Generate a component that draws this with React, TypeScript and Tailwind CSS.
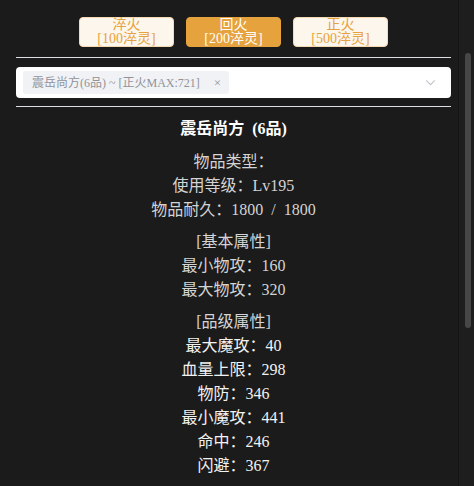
import * as React from "react";

const font = {
  fontFamily: '"Liberation Serif", "Noto Sans CJK SC", serif',
};

const tabs = [
  { name: "淬火", cost: "[100淬灵]" },
  { name: "回火", cost: "[200淬灵]" },
  { name: "正火", cost: "[500淬灵]" },
];

const baseInfo = ["物品类型：", "使用等级：Lv195", "物品耐久：1800 / 1800"];
const basicAttrs = ["最小物攻：160", "最大物攻：320"];
const gradeAttrs = [
  "最大魔攻：40",
  "血量上限：298",
  "物防：346",
  "最小魔攻：441",
  "命中：246",
  "闪避：367",
];

export default function App() {
  const [active, setActive] = React.useState(1);

  return (
    <div
      className="flex h-[486px] w-[474px] overflow-hidden bg-[#1b1b1b]"
      style={font}
    >
      <div className="flex w-[458px] flex-col pl-4 pr-[7px] pt-[17px]">
        <div className="flex justify-center gap-3">
          {tabs.map((t, i) => (
            <button
              key={t.name}
              type="button"
              onClick={() => setActive(i)}
              className={
                i === active
                  ? "flex h-[30px] w-[95px] flex-col items-center justify-center rounded-[4px] border border-[#e6a23c] bg-[#e6a23c] text-[14px] leading-[14px] text-white"
                  : "flex h-[30px] w-[95px] flex-col items-center justify-center rounded-[4px] border border-[#f5dab1] bg-[#fdf6ec] text-[14px] leading-[14px] text-[#e6a23c]"
              }
            >
              <span>{t.name}</span>
              <span>{t.cost}</span>
            </button>
          ))}
        </div>

        <div className="mt-[10px] h-px bg-[#dcdfe6]" />

        <div className="mt-[9px] flex h-[31px] items-center rounded-[4px] bg-white pl-[7px] pr-[14px]">
          <div className="flex h-[23px] items-center gap-[14px] rounded-[3px] bg-[#f0f2f5] pl-[9px] pr-[8px] text-[12px] text-[#909399]">
            <span>震岳尚方(6品) ~ [正火MAX:721]</span>
            <span className="text-[13px] leading-none text-[#909399]">×</span>
          </div>
          <div className="flex-1" />
          <svg
            width="13"
            height="13"
            viewBox="0 0 24 24"
            fill="none"
            stroke="#c0c4cc"
            strokeWidth="2"
          >
            <path d="M4 8l8 8 8-8" />
          </svg>
        </div>

        <div className="mt-[8px] h-px bg-[#dcdfe6]" />

        <div className="mt-[10px] flex flex-col items-center text-[16px] leading-[24px] [word-spacing:4px]">
          <div className="font-bold text-white">震岳尚方 (6品)</div>

          <div className="mt-[9px] flex flex-col items-center text-[#d4d4d4]">
            {baseInfo.map((l) => (
              <div key={l}>{l}</div>
            ))}
          </div>

          <div className="mt-[8px] flex flex-col items-center text-[#d4d4d4]">
            <div>[基本属性]</div>
            {basicAttrs.map((l) => (
              <div key={l}>{l}</div>
            ))}
          </div>

          <div className="mt-[8px] flex flex-col items-center text-[#f2f2f2]">
            <div className="text-[#d4d4d4]">[品级属性]</div>
            {gradeAttrs.map((l) => (
              <div key={l}>{l}</div>
            ))}
          </div>
        </div>
      </div>

      <div className="flex w-[16px] justify-center border-l border-[#151515] bg-[#1e1e1e] pl-[2px]">
        <div className="mt-[53px] h-[275px] w-[6px] rounded-full bg-[#474747]" />
      </div>
    </div>
  );
}
